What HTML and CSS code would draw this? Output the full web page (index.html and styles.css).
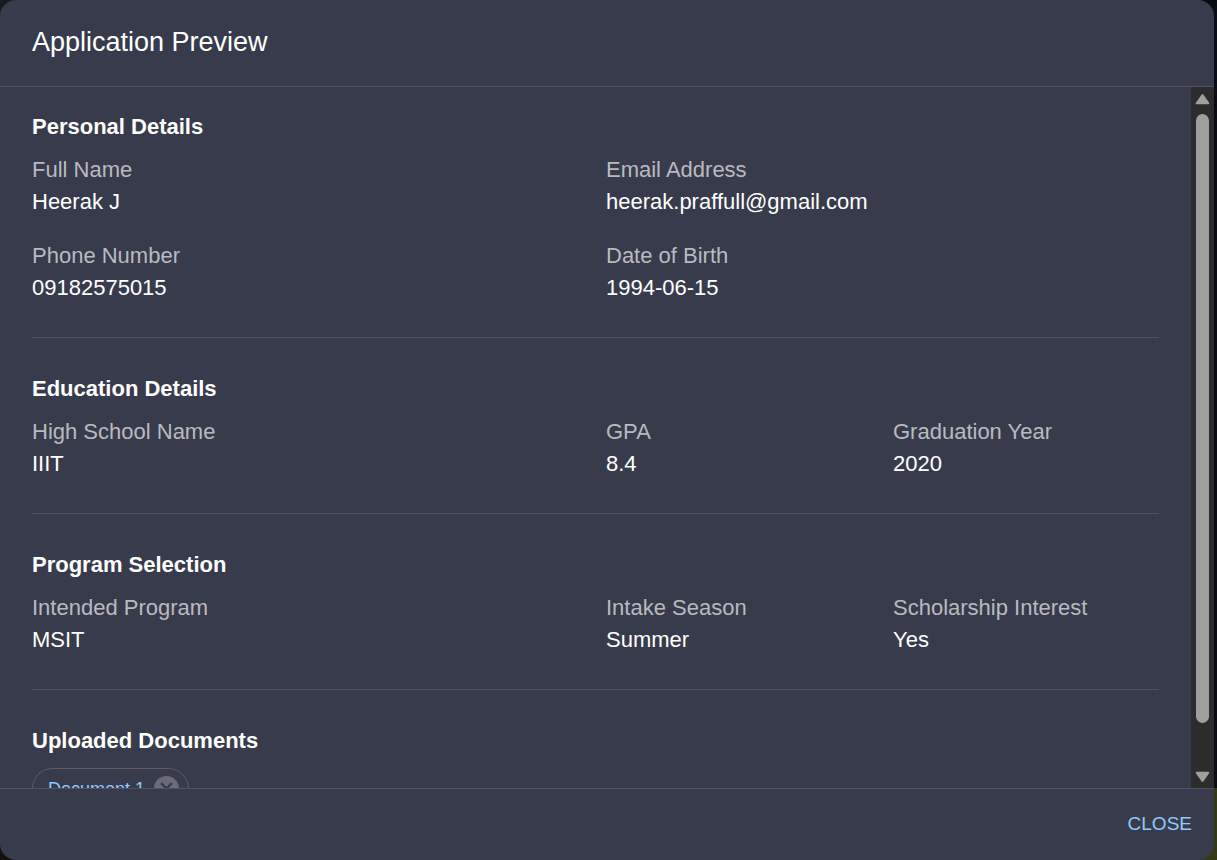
FILE: index.html
```html
<!DOCTYPE html>
<html lang="en">
<head>
<meta charset="utf-8">
<title>Application Preview</title>
<meta name="viewport" content="width=device-width, initial-scale=1">
<link rel="stylesheet" href="styles.css">
</head>
<body>
<div class="dialog" role="dialog" aria-labelledby="dialog-title">
  <header class="dialog-header"><h1 id="dialog-title">Application Preview</h1></header>
  <div class="dialog-body">
    <main class="content">
      <section class="section">
        <h2>Personal Details</h2>
        <dl class="fields">
          <div class="field wide"><dt>Full Name</dt><dd>Heerak J</dd></div>
          <div class="field wide"><dt>Email Address</dt><dd>heerak.praffull@gmail.com</dd></div>
          <div class="field wide"><dt>Phone Number</dt><dd>09182575015</dd></div>
          <div class="field wide"><dt>Date of Birth</dt><dd>1994-06-15</dd></div>
        </dl>
      </section>
      <section class="section">
        <h2>Education Details</h2>
        <dl class="fields">
          <div class="field wide"><dt>High School Name</dt><dd>IIIT</dd></div>
          <div class="field"><dt>GPA</dt><dd>8.4</dd></div>
          <div class="field"><dt>Graduation Year</dt><dd>2020</dd></div>
        </dl>
      </section>
      <section class="section">
        <h2>Program Selection</h2>
        <dl class="fields">
          <div class="field wide"><dt>Intended Program</dt><dd>MSIT</dd></div>
          <div class="field"><dt>Intake Season</dt><dd>Summer</dd></div>
          <div class="field"><dt>Scholarship Interest</dt><dd>Yes</dd></div>
        </dl>
      </section>
      <section class="section">
        <h2>Uploaded Documents</h2>
        <div class="chip">
          <a href="#document-1">Document 1</a>
          <button class="chip-remove" type="button" aria-label="Remove Document 1">
            <svg viewBox="2 2 20 20" aria-hidden="true"><path d="M12 2C6.47 2 2 6.47 2 12s4.47 10 10 10 10-4.47 10-10S17.53 2 12 2zm5 13.59L15.59 17 12 13.41 8.41 17 7 15.59 10.59 12 7 8.41 8.41 7 12 10.59 15.59 7 17 8.41 13.41 12 17 15.59z"/></svg>
          </button>
        </div>
      </section>
    </main>
    <div class="scrollbar" aria-hidden="true">
      <svg class="arrow" viewBox="0 0 15 12"><path d="M7.5 2 13.3 10.3H1.7Z"/></svg>
      <div class="track"><div class="thumb"></div></div>
      <svg class="arrow" viewBox="0 0 15 12"><path d="M7.5 10 13.3 1.7H1.7Z"/></svg>
    </div>
  </div>
  <footer class="dialog-footer"><button class="close" type="button">CLOSE</button></footer>
</div>
</body>
</html>
```
FILE: styles.css
```css
* {
  box-sizing: border-box;
}

body {
  margin: 0;
  padding-right: 3px;
  height: 100vh;
  overflow: hidden;
  background:
    linear-gradient(#080c14 0 788px, #333a14 788px) right / 50% 100% no-repeat,
    linear-gradient(#191b22, #14100b);
  color: #fff;
  font-family: "Liberation Sans", Arial, sans-serif;
  font-size: 22px;
  line-height: 32px;
}

h1, h2, dl, dd {
  margin: 0;
}

.dialog {
  display: flex;
  flex-direction: column;
  height: 100%;
  overflow: hidden;
  border-radius: 16px;
  background: #383b4b;
}

.dialog-header {
  padding: 22px 32px 24px;
}

.dialog-header h1 {
  font-size: 27px;
  font-weight: 400;
  line-height: 40px;
}

.dialog-body {
  display: flex;
  flex: 1;
  min-height: 0;
  border-top: 1px solid #515361;
  border-bottom: 1px solid #515361;
}

.content {
  flex: 1;
  overflow: hidden;
  padding: 24px 32px;
}

.section + .section {
  margin-top: 33px;
  padding-top: 35px;
  border-top: 1px solid #4e515f;
}

.section h2 {
  margin-bottom: 11px;
  font-size: 22px;
  font-weight: 700;
}

.fields {
  display: grid;
  grid-template-columns: repeat(4, 1fr);
  gap: 22px 21px;
}

.wide {
  grid-column: span 2;
}

.field dt {
  color: #b9bac0;
}

.chip {
  display: inline-flex;
  align-items: center;
  gap: 9px;
  height: 41px;
  padding: 0 9px 0 15px;
  border: 1px solid #5e5e61;
  border-radius: 22px;
  font-size: 18px;
}

.chip a {
  color: #90caf9;
  text-decoration: none;
}

.chip-remove {
  width: 25px;
  height: 25px;
  padding: 0;
  border: 0;
  background: none;
}

.chip-remove svg {
  display: block;
  fill: #6b6c78;
}

.scrollbar {
  display: flex;
  flex-direction: column;
  align-items: center;
  width: 23px;
  padding: 6px 0 5px;
  background: #2c2c2c;
}

.arrow {
  width: 15px;
  height: 12px;
  fill: #9f9f9f;
  stroke: #9f9f9f;
  stroke-width: 2;
  stroke-linejoin: round;
}

.track {
  flex: 1;
  width: 13px;
  padding: 9px 0;
}

.thumb {
  height: 94%;
  border-radius: 7px;
  background: #9f9f9f;
}

.dialog-footer {
  display: flex;
  justify-content: flex-end;
  padding: 15px 13px 16px;
}

.close {
  padding: 0 9px;
  border: 0;
  background: none;
  color: #90caf9;
  font: inherit;
  font-size: 19px;
  line-height: 40px;
}
```
